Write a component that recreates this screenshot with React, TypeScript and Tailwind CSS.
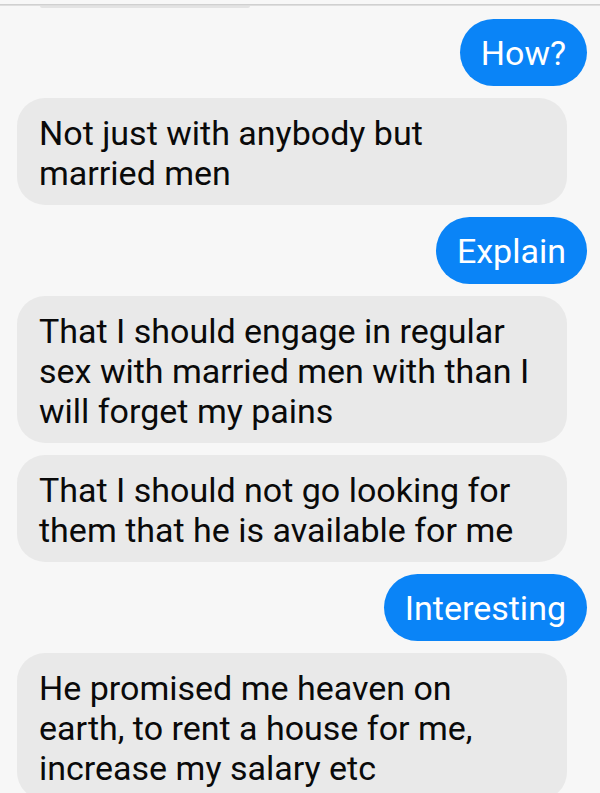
import React from "react";

const Sent = ({ text }: { text: string }) => (
  <div className="flex justify-end pr-[13px]">
    <div className="h-[67px] flex items-center rounded-full bg-[#0a84f7] px-[21px] text-white text-[34px] leading-none">
      {text}
    </div>
  </div>
);

const Recv = ({ lines }: { lines: string[] }) => (
  <div className="ml-[17px] mr-[33px] rounded-[28px] bg-[#e9e9e9] pl-[22px] pr-[12px] pt-[15px] pb-[12px] text-[34px] leading-[40px] text-[#0a0a0a]">
    {lines.map((l, i) => (
      <div key={i} className="whitespace-nowrap">
        {l}
      </div>
    ))}
  </div>
);

export default function App() {
  return (
    <div
      className="w-[600px] h-[793px] overflow-hidden bg-[#f7f7f7] relative"
      style={{ fontFamily: "Roboto, 'Liberation Sans', sans-serif" }}
    >
      <div className="h-[4px] bg-[#f7f7f7]" />
      <div className="h-[1px] bg-[#d0d0d0]" />
      <div className="h-[1px] bg-[#dedede]" />
      <div className="ml-[40px] w-[210px] h-[2px] bg-[#e3e3e3] rounded-b-full" />
      <div className="flex flex-col gap-[12px] pt-[11px]">
        <Sent text="How?" />
        <Recv lines={["Not just with anybody but", "married men"]} />
        <Sent text="Explain" />
        <Recv
          lines={[
            "That I should engage in regular",
            "sex with married men with than I",
            "will forget my pains",
          ]}
        />
        <Recv
          lines={[
            "That I should not go looking for",
            "them that he is available for me",
          ]}
        />
        <Sent text="Interesting" />
        <Recv
          lines={[
            "He promised me heaven on",
            "earth, to rent a house for me,",
            "increase my salary etc",
          ]}
        />
      </div>
    </div>
  );
}
